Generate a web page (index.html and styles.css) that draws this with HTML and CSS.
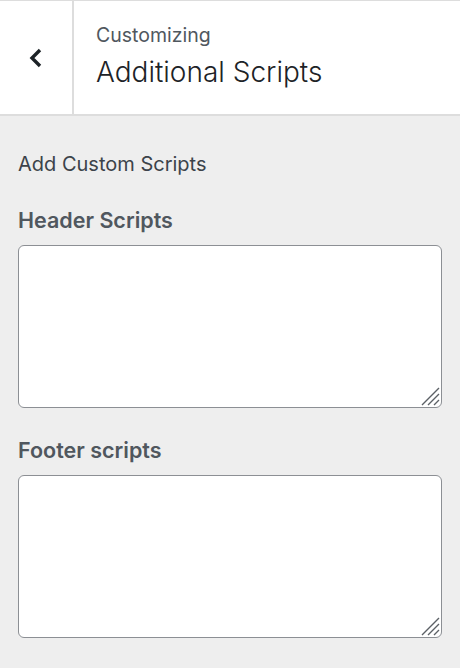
FILE: index.html
```html
<!DOCTYPE html>
<html lang="en">
<head>
<meta charset="utf-8">
<title>Customizing Additional Scripts</title>
<link rel="stylesheet" href="styles.css">
</head>
<body>
<div class="header">
  <button class="back" aria-label="Back">
    <svg width="24" height="24" viewBox="0 0 24 24" aria-hidden="true"><polyline points="16,4 8,12 16,20" fill="none" stroke="#1d2327" stroke-width="3.4" stroke-linejoin="miter"/></svg>
  </button>
  <div class="titles">
    <span class="sub">Customizing</span>
    <h3 class="title">Additional Scripts</h3>
  </div>
</div>
<div class="panel">
  <div class="desc">Add Custom Scripts</div>
  <label class="control-title" for="hs">Header Scripts</label>
  <div class="field">
    <textarea id="hs" class="code"></textarea>
    <svg class="grip" width="22" height="22" viewBox="0 0 22 22" aria-hidden="true"><path d="M3 20 L20 3 M9 20 L20 9 M15 20 L20 15" stroke="#5c6166" stroke-width="1.4" fill="none"/></svg>
  </div>
  <label class="control-title" for="fs">Footer scripts</label>
  <div class="field">
    <textarea id="fs" class="code"></textarea>
    <svg class="grip" width="22" height="22" viewBox="0 0 22 22" aria-hidden="true"><path d="M3 20 L20 3 M9 20 L20 9 M15 20 L20 15" stroke="#5c6166" stroke-width="1.4" fill="none"/></svg>
  </div>
</div>
</body>
</html>
```
FILE: styles.css
```css
html {
  background: #eeeeee;
}
body {
  margin: 0;
  font-family: Inter, "Noto Sans", sans-serif;
  color: #3c434a;
}
.header {
  display: flex;
  background: #ffffff;
  border-top: 1px solid #dddddd;
  border-bottom: 2px solid #dddddd;
  height: 113px;
}
.back {
  box-sizing: border-box;
  width: 74px;
  flex: 0 0 74px;
  border: 0;
  border-right: 2px solid #dddddd;
  background: transparent;
  padding: 0;
  display: flex;
  align-items: center;
  justify-content: center;
  cursor: pointer;
}
.back svg {
  display: block;
}
.titles {
  padding: 22px 0 0 22px;
  display: flex;
  flex-direction: column;
}
.sub {
  font-size: 19.5px;
  line-height: 24px;
  color: #50575e;
}
.title {
  margin: 7px 0 0;
  font-size: 28px;
  line-height: 36px;
  font-weight: 300;
  color: #1d2327;
}
.panel {
  padding: 34px 18px 20px;
  display: flex;
  flex-direction: column;
}
.desc {
  font-size: 20px;
  line-height: 28px;
  color: #3c434a;
}
.control-title {
  margin-top: 28px;
  font-size: 21.5px;
  line-height: 28px;
  font-weight: 600;
  color: #50575e;
}
.field {
  position: relative;
  margin-top: 11px;
}
.code {
  display: block;
  box-sizing: border-box;
  width: 100%;
  height: 163px;
  border: 1px solid #8c8f94;
  border-radius: 6px;
  background: #ffffff;
  font-family: "Liberation Mono", monospace;
  font-size: 14px;
  padding: 6px 8px;
  resize: none;
}
.grip {
  position: absolute;
  right: 1px;
  bottom: 1px;
  pointer-events: none;
}
```
